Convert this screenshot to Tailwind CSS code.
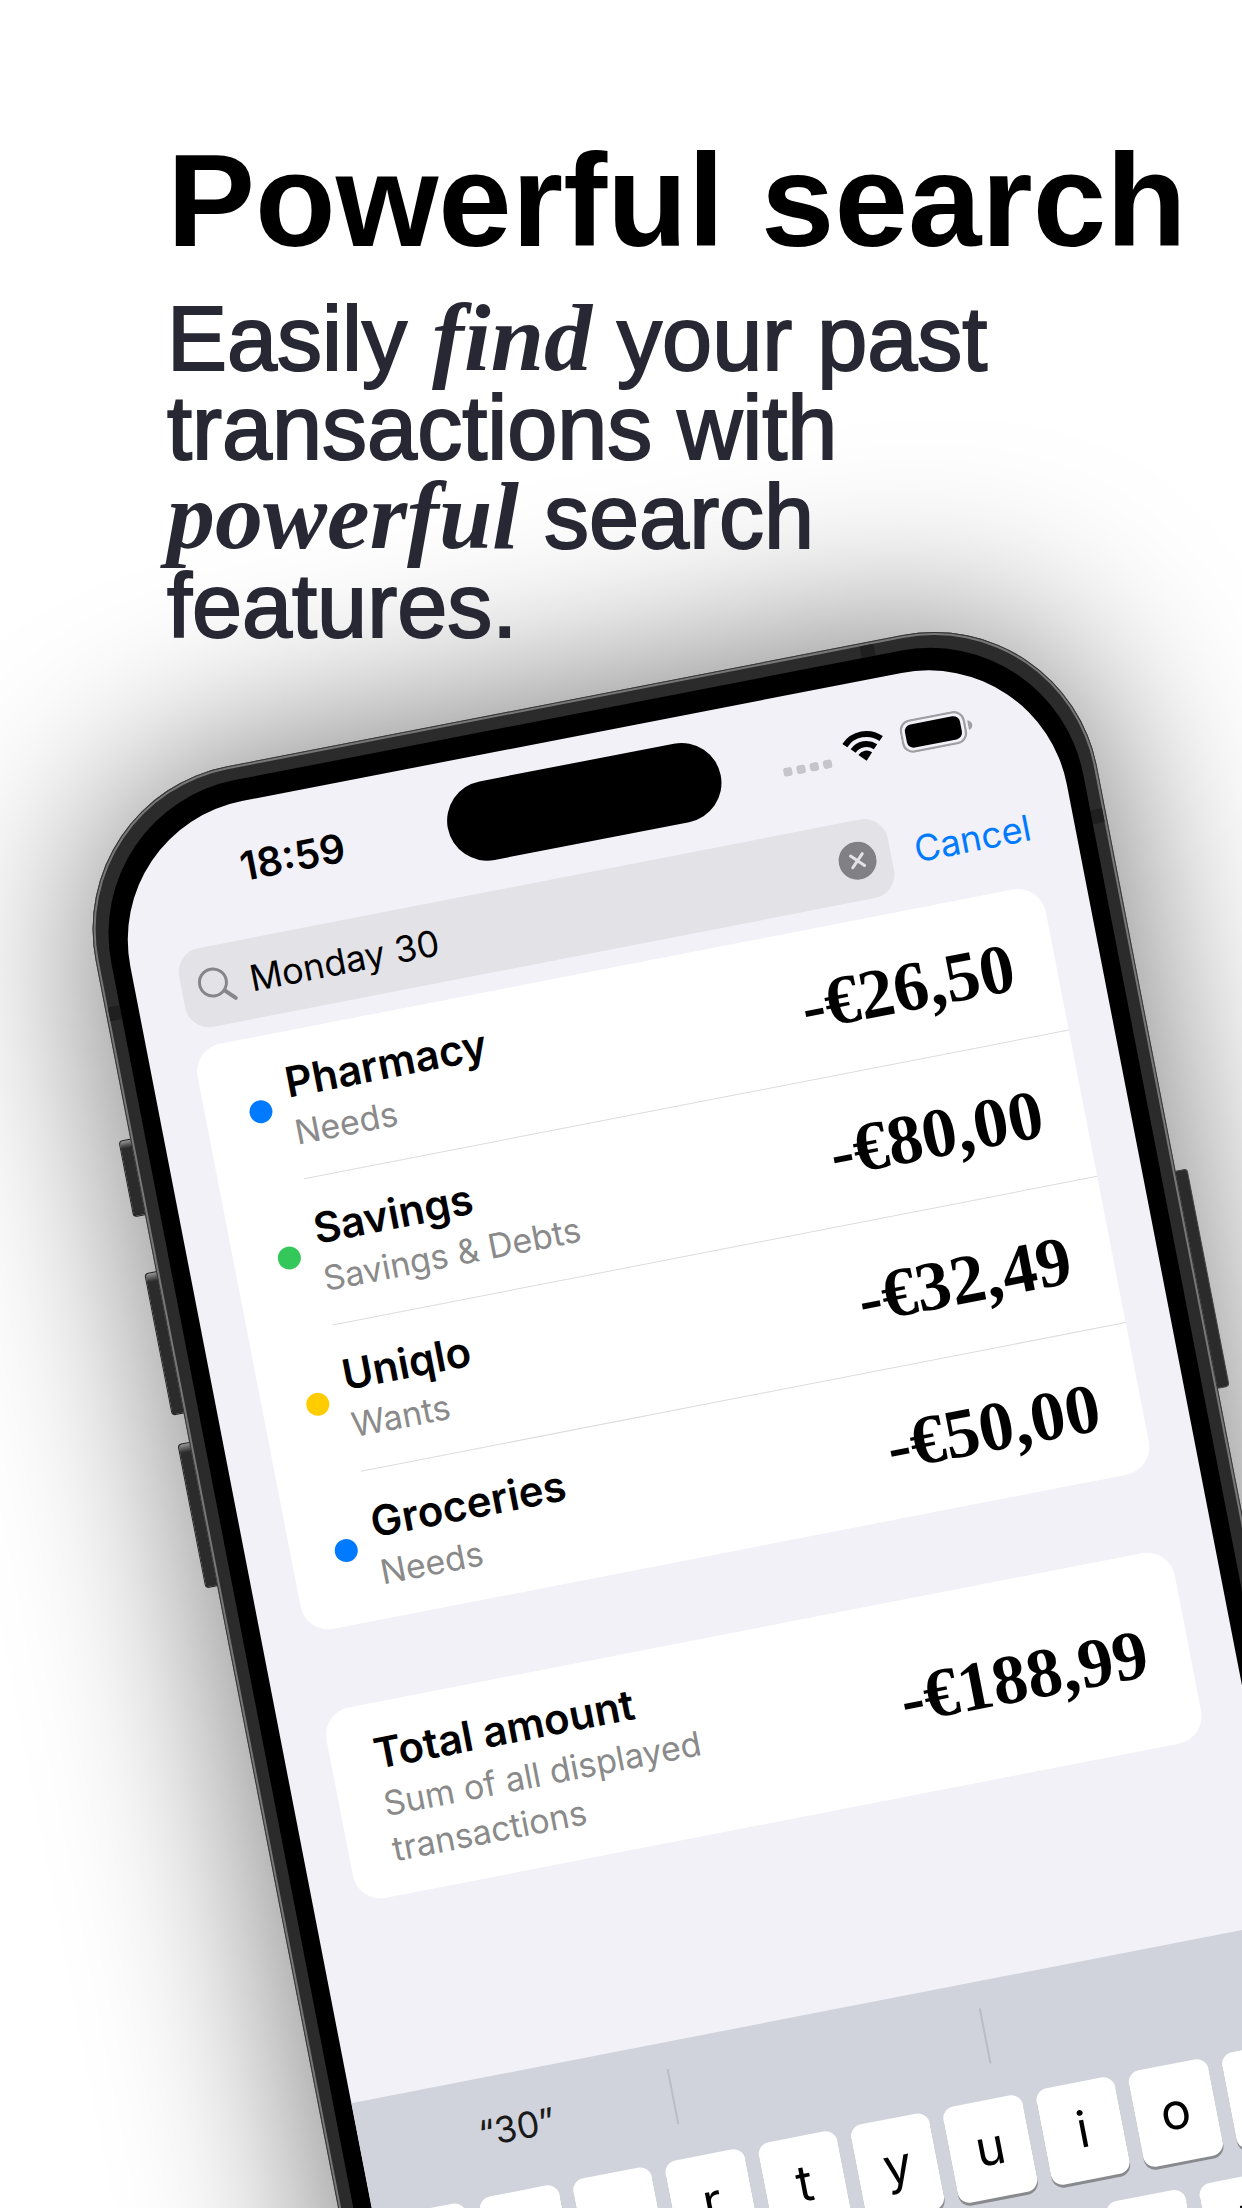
<!DOCTYPE html>
<html lang="en">
<head>
<meta charset="utf-8">
<meta name="viewport" content="width=device-width, initial-scale=1">
<title>Powerful search</title>
<script src="https://cdn.jsdelivr.net/npm/@tailwindcss/browser@4"></script>
</head>
<body class="bg-white">
<main class="h-screen w-full overflow-hidden bg-white font-['Liberation_Sans',sans-serif]">
  <header class="relative z-10 pl-[167px] pt-[135px]">
    <h1 class="whitespace-nowrap text-[132px] leading-[132px] font-bold text-black">Powerful search</h1>
    <p class="mt-7 max-w-[900px] text-[90px] leading-[89px] text-[#282834] [-webkit-text-stroke:2px_#282834]">Easily <em class="font-['Liberation_Serif',serif] text-[96px] leading-[0px] font-bold [-webkit-text-stroke:0px]">find</em> your past transactions with <em class="font-['Liberation_Serif',serif] text-[96px] leading-[0px] font-bold [-webkit-text-stroke:0px]">powerful</em> search features.</p>
  </header>

  <section class="relative mt-[147px] mr-[158px] ml-16 origin-top-left rotate-[-11deg] font-[Inter,sans-serif]" aria-label="Phone">
    <!-- soft shadow behind the phone -->
    <div class="absolute inset-0 rounded-[166px] bg-black/55 blur-[96px]"></div>
    <!-- side buttons -->
    <span class="absolute top-[347px] -left-3 h-[78px] w-5 rounded-l-sm border border-[#222] bg-linear-to-b from-[#999] from-0% to-[#2b2b2b] to-10%"></span>
    <span class="absolute top-[482px] -left-3 h-[145px] w-5 rounded-l-sm border border-[#222] bg-linear-to-b from-[#999] from-0% to-[#2b2b2b] to-6%"></span>
    <span class="absolute top-[656px] -left-3 h-[147px] w-5 rounded-l-sm border border-[#222] bg-linear-to-b from-[#999] from-0% to-[#2b2b2b] to-6%"></span>
    <span class="absolute top-[578px] -right-3 h-[222px] w-5 rounded-r-sm border border-[#444] bg-[#2b2b2b]"></span>

    <div class="relative rounded-[166px] bg-[#2b2b2b] p-[15px] shadow-[inset_0_0_0_1px_#333,inset_0_0_0_3px_#777]">
      <!-- antenna bands -->
      <span class="absolute top-[214px] left-[3px] h-[14px] w-3 bg-[#1f1f1f]"></span>
      <span class="absolute top-[208px] right-[3px] h-[14px] w-3 bg-[#1f1f1f]"></span>
      <span class="absolute top-[3px] right-[196px] h-3 w-[14px] bg-[#1f1f1f]"></span>

      <div class="relative rounded-[156px] bg-black px-[18px] pt-[22px] pb-5">
        <div class="overflow-hidden rounded-[141px] bg-[#f2f1f7]">
          <!-- status bar -->
          <div class="relative flex h-[136px] items-start justify-between pt-[26px] pr-20 pl-[127px]">
            <time class="pt-[19px] text-[40px] leading-10 font-semibold text-black">18:59</time>
            <span class="absolute top-[26px] left-1/2 h-20 w-[278px] -translate-x-1/2 rounded-full bg-black"></span>
            <div class="flex h-[76px] items-center">
              <svg class="mt-[22px] h-[9px] w-[50px]" viewBox="0 0 50 9" fill="#c6c5cb" aria-hidden="true"><rect width="9" height="9" rx="3"/><rect x="13.5" width="9" height="9" rx="3"/><rect x="27" width="9" height="9" rx="3"/><rect x="40.500" width="9" height="9" rx="3"/></svg>
              <svg class="ml-3 h-8 w-[44px]" viewBox="0 0 44 32" fill="none" stroke="#000" stroke-width="6" aria-hidden="true"><path d="M3.500 12.500a26 26 0 0 1 37 0"/><path d="M10.600 19.500a16.200 16.200 0 0 1 22.800 0"/><path d="M22 31.500l-7-7.200a10 10 0 0 1 14 0z" fill="#000" stroke="none"/></svg>
              <svg class="ml-4 h-[34px] w-[74px]" viewBox="0 0 66 30" aria-hidden="true"><rect x="1" y="1" width="57" height="28" rx="9" fill="none" stroke="#a0a0a4" stroke-width="2"/><rect x="4.500" y="4.500" width="50" height="21" rx="6" fill="#000"/><path d="M61 10.500c5 1.500 5 7.500 0 9z" fill="#a0a0a4"/></svg>
            </div>
          </div>

          <!-- search -->
          <form class="flex items-center pr-11 pl-[46px]">
            <label class="flex h-20 min-w-0 flex-1 items-center rounded-3xl bg-[#e3e2e7] px-[15px]">
              <svg class="h-10 w-10 shrink-0" viewBox="0 0 40 40" fill="none" stroke="#85858a" aria-hidden="true"><circle cx="17" cy="16.500" r="13.500" stroke-width="3"/><path d="M27 26.500l9.500 9.500" stroke-width="4" stroke-linecap="round"/></svg>
              <input type="text" value="Monday 30" aria-label="Search" class="ml-[14px] min-w-0 flex-1 bg-transparent text-[36px] leading-10 text-black outline-none">
              <button type="button" aria-label="Clear" class="h-[38px] w-[38px] shrink-0"><svg viewBox="0 0 38 38"><circle cx="19" cy="19" r="19" fill="#808085"/><path d="M13 13l12 12M25 13L13 25" stroke="#e3e2e7" stroke-width="3" stroke-linecap="round"/></svg></button>
            </label>
            <button type="button" class="ml-6 text-[36px] leading-10 text-[#007aff]">Cancel</button>
          </form>

          <!-- transactions -->
          <ul class="mx-[45px] mt-[18px] rounded-[28px] bg-white">
            <li class="flex h-[149px] items-center pl-11">
              <span class="size-[23px] shrink-0 rounded-full bg-[#007aff]"></span>
              <div class="ml-[18px] flex h-full flex-1 items-center justify-between border-b border-[#dcdcdc] pr-[42px]">
                <div class="pt-1"><h2 class="text-[42px] leading-[48px] font-semibold text-black">Pharmacy</h2><p class="mt-1 text-[34px] leading-[46px] text-[#8a8a8a]">Needs</p></div>
                <strong class="pt-1 font-['Liberation_Serif',serif] text-[70px] leading-[76px] text-black">-€26,50</strong>
              </div>
            </li>
            <li class="flex h-[149px] items-center pl-11">
              <span class="size-[23px] shrink-0 rounded-full bg-[#34c759]"></span>
              <div class="ml-[18px] flex h-full flex-1 items-center justify-between border-b border-[#dcdcdc] pr-[42px]">
                <div class="pt-1"><h2 class="text-[42px] leading-[48px] font-semibold text-black">Savings</h2><p class="mt-1 text-[34px] leading-[46px] text-[#8a8a8a]">Savings &amp; Debts</p></div>
                <strong class="pt-1 font-['Liberation_Serif',serif] text-[70px] leading-[76px] text-black">-€80,00</strong>
              </div>
            </li>
            <li class="flex h-[149px] items-center pl-11">
              <span class="size-[23px] shrink-0 rounded-full bg-[#ffcc00]"></span>
              <div class="ml-[18px] flex h-full flex-1 items-center justify-between border-b border-[#dcdcdc] pr-[42px]">
                <div class="pt-1"><h2 class="text-[42px] leading-[48px] font-semibold text-black">Uniqlo</h2><p class="mt-1 text-[34px] leading-[46px] text-[#8a8a8a]">Wants</p></div>
                <strong class="pt-1 font-['Liberation_Serif',serif] text-[70px] leading-[76px] text-black">-€32,49</strong>
              </div>
            </li>
            <li class="flex h-[149px] items-center pl-11">
              <span class="size-[23px] shrink-0 rounded-full bg-[#007aff]"></span>
              <div class="ml-[18px] flex h-full flex-1 items-center justify-between pr-[42px]">
                <div class="pt-1"><h2 class="text-[42px] leading-[48px] font-semibold text-black">Groceries</h2><p class="mt-1 text-[34px] leading-[46px] text-[#8a8a8a]">Needs</p></div>
                <strong class="pt-1 font-['Liberation_Serif',serif] text-[70px] leading-[76px] text-black">-€50,00</strong>
              </div>
            </li>
          </ul>

          <!-- total -->
          <div class="mx-[45px] mt-20 flex h-[194px] items-center justify-between rounded-[28px] bg-white pr-[42px] pl-11">
            <div class="w-[360px] pt-1"><h2 class="text-[42px] leading-[48px] font-semibold text-black">Total amount</h2><p class="mt-1 text-[34px] leading-[46px] text-[#8a8a8a]">Sum of all displayed transactions</p></div>
            <strong class="pt-1 font-['Liberation_Serif',serif] text-[70px] leading-[76px] text-black">-€188,99</strong>
          </div>

          <!-- keyboard -->
          <div class="mt-[195px] bg-[#d0d3db] pb-40">
            <div class="grid h-[118px] grid-cols-3 pt-[27px]">
              <button type="button" class="h-[56px] border-r-2 border-[#bbbdc4] text-[36px] leading-[54px] text-[#1a1a1a]">“30”</button>
              <span class="h-[56px] border-r-2 border-[#bbbdc4]"></span>
            </div>
            <div class="grid grid-cols-10 gap-[14px] px-3 text-[50px] leading-[88px] text-black">
              <button type="button" class="h-[98px] rounded-xl bg-white pb-1 shadow-[0_3px_0_#898a8d]">q</button>
              <button type="button" class="h-[98px] rounded-xl bg-white pb-1 shadow-[0_3px_0_#898a8d]">w</button>
              <button type="button" class="h-[98px] rounded-xl bg-white pb-1 shadow-[0_3px_0_#898a8d]">e</button>
              <button type="button" class="h-[98px] rounded-xl bg-white pb-1 shadow-[0_3px_0_#898a8d]">r</button>
              <button type="button" class="h-[98px] rounded-xl bg-white pb-1 shadow-[0_3px_0_#898a8d]">t</button>
              <button type="button" class="h-[98px] rounded-xl bg-white pb-1 shadow-[0_3px_0_#898a8d]">y</button>
              <button type="button" class="h-[98px] rounded-xl bg-white pb-1 shadow-[0_3px_0_#898a8d]">u</button>
              <button type="button" class="h-[98px] rounded-xl bg-white pb-1 shadow-[0_3px_0_#898a8d]">i</button>
              <button type="button" class="h-[98px] rounded-xl bg-white pb-1 shadow-[0_3px_0_#898a8d]">o</button>
              <button type="button" class="h-[98px] rounded-xl bg-white pb-1 shadow-[0_3px_0_#898a8d]">p</button>
            </div>
            <div class="mt-[26px] grid grid-cols-9 gap-[14px] px-[59px] text-[50px] leading-[88px] text-black">
              <button type="button" class="h-[98px] rounded-xl bg-white pb-1 shadow-[0_3px_0_#898a8d]">a</button>
              <button type="button" class="h-[98px] rounded-xl bg-white pb-1 shadow-[0_3px_0_#898a8d]">s</button>
              <button type="button" class="h-[98px] rounded-xl bg-white pb-1 shadow-[0_3px_0_#898a8d]">d</button>
              <button type="button" class="h-[98px] rounded-xl bg-white pb-1 shadow-[0_3px_0_#898a8d]">f</button>
              <button type="button" class="h-[98px] rounded-xl bg-white pb-1 shadow-[0_3px_0_#898a8d]">g</button>
              <button type="button" class="h-[98px] rounded-xl bg-white pb-1 shadow-[0_3px_0_#898a8d]">h</button>
              <button type="button" class="h-[98px] rounded-xl bg-white pb-1 shadow-[0_3px_0_#898a8d]">j</button>
              <button type="button" class="h-[98px] rounded-xl bg-white pb-1 shadow-[0_3px_0_#898a8d]">k</button>
              <button type="button" class="h-[98px] rounded-xl bg-white pb-1 shadow-[0_3px_0_#898a8d]">l</button>
            </div>
          </div>
        </div>
      </div>
    </div>
  </section>
</main>
</body>
</html>
